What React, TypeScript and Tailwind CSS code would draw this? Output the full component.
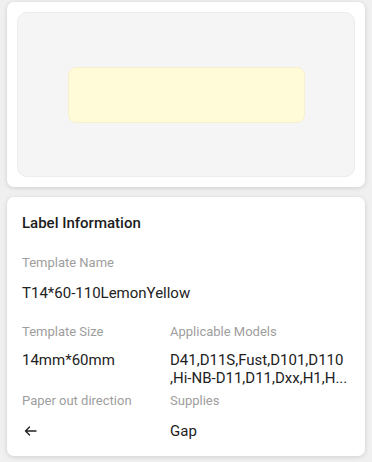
import React from "react";

const font = { fontFamily: "Roboto, 'Noto Sans', sans-serif" };

function Field({ label, children }: { label: string; children: React.ReactNode }) {
  return (
    <div className="min-w-0">
      <div className="text-[13px] leading-5 text-[#9e9e9e]">{label}</div>
      {children}
    </div>
  );
}

export default function App() {
  return (
    <div className="w-[372px] h-[462px] bg-[#f0f0f0] px-[7px] pt-[2px] overflow-hidden" style={font}>
      {/* preview card */}
      <div className="h-[185px] bg-white rounded-[7px] shadow-[0_1px_5px_rgba(0,0,0,0.14)] p-[10px]">
        <div className="h-full rounded-[10px] bg-[#f5f5f5] border border-[#ececec] flex items-center justify-center">
          <div className="w-[237px] h-[56px] rounded-[8px] bg-[#fffad8] border border-[#f6f0cf]" />
        </div>
      </div>

      {/* info card */}
      <div className="mt-[10px] h-[259px] bg-white rounded-[7px] shadow-[0_1px_5px_rgba(0,0,0,0.14)] px-[15px] pt-[16px]">
        <div className="text-[15px] leading-5 font-medium text-[#1c1c1c]">Label Information</div>

        <div className="mt-[20px]">
          <Field label="Template Name">
            <div className="mt-[10px] text-[15px] leading-5 text-[#222]">T14*60-110LemonYellow</div>
          </Field>
        </div>

        <div className="mt-[19px] grid grid-cols-[148px_1fr]">
          <Field label="Template Size">
            <div className="mt-[9px] text-[15px] leading-[18px] text-[#222]">14mm*60mm</div>
          </Field>
          <Field label="Applicable Models">
            <div className="mt-[9px] text-[15px] leading-[18px] text-[#222]">
              <div className="whitespace-nowrap">D41,D11S,Fust,D101,D110</div>
              <div className="whitespace-nowrap">,Hi-NB-D11,D11,Dxx,H1,H...</div>
            </div>
          </Field>
        </div>

        <div className="mt-[4px] grid grid-cols-[148px_1fr]">
          <Field label="Paper out direction">
            <div className="mt-[10px] h-5 flex items-center pl-[2px]">
              <svg width="13" height="10" viewBox="0 0 13 10" fill="none" stroke="#222" strokeWidth="1.4" strokeLinecap="round" strokeLinejoin="round">
                <path d="M12 5H1.5M5.5 1L1.5 5l4 4" />
              </svg>
            </div>
          </Field>
          <Field label="Supplies">
            <div className="mt-[10px] text-[15px] leading-5 text-[#222]">Gap</div>
          </Field>
        </div>
      </div>
    </div>
  );
}
